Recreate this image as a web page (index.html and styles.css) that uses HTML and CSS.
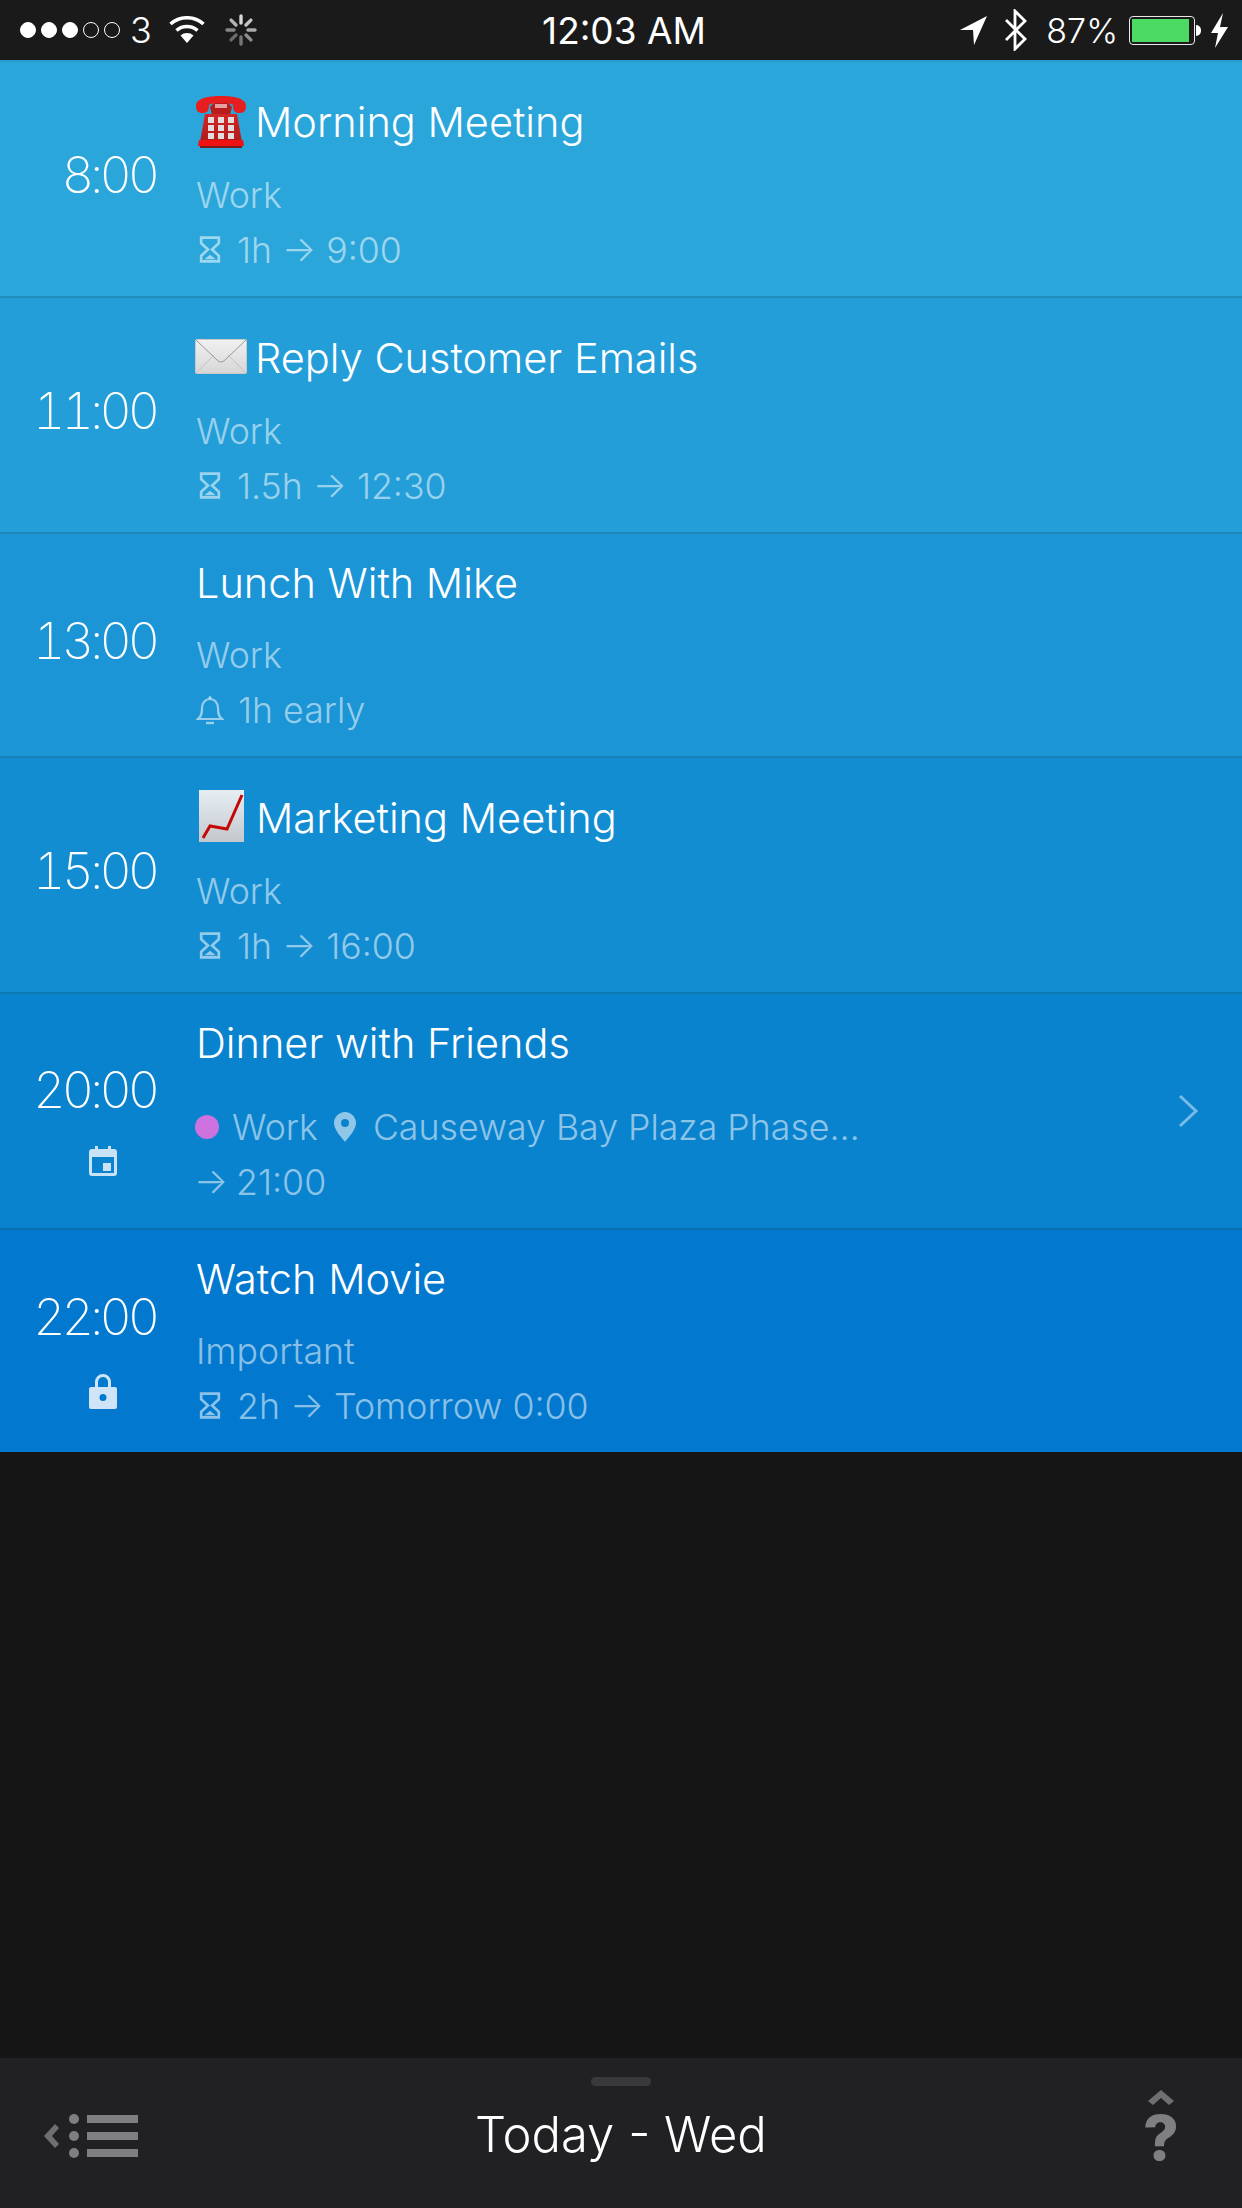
FILE: index.html
```html
<!DOCTYPE html>
<html lang="en">

<head>
	<meta charset="UTF-8" />
	<title>Today</title>
	<link rel="stylesheet" href="styles.css">
</head>

<body>
	<div class="app">
		<!-- status bar -->
		<div class="status">
			<div class="status-left">
				<span class="sig on"></span><span class="sig on"></span><span class="sig on"></span><span class="sig"></span><span class="sig"></span>
				<span class="carrier">3</span>
				<svg class="wifi" width="38" height="28" viewBox="0 0 38 28">
					<path d="M19 27 L12.5 19.5 A10 10 0 0 1 25.5 19.5 Z" fill="#fff" />
					<path d="M8.5 14.5 A16 16 0 0 1 29.5 14.5" fill="none" stroke="#fff" stroke-width="3.6" />
					<path d="M2.5 8 A25 25 0 0 1 35.5 8" fill="none" stroke="#fff" stroke-width="3.6" />
				</svg>
				<svg class="spinner" width="32" height="32" viewBox="0 0 32 32" stroke-width="3.4" stroke-linecap="round">
					<path d="M16 2V9" stroke="#d8d8d8" />
					<path d="M25.9 6.1L21 11" stroke="#c4c4c4" />
					<path d="M30 16H23" stroke="#aaa" />
					<path d="M25.9 25.9L21 21" stroke="#8e8e8e" />
					<path d="M16 30V23" stroke="#777" />
					<path d="M6.1 25.9L11 21" stroke="#6c6c6c" />
					<path d="M2 16H9" stroke="#888" />
					<path d="M6.1 6.1L11 11" stroke="#b4b4b4" />
				</svg>
			</div>
			<div class="clock">12:03 AM</div>
			<div class="status-right">
				<svg class="loc" width="27" height="30" viewBox="0 0 27 30">
					<path d="M0 15 L27 1 L14 30 L13 15 Z" fill="#fff" />
				</svg>
				<svg class="bt" width="24" height="42" viewBox="0 0 24 42">
					<path d="M2 11 L21 30 L11 40 V2 L21 12 L2 31" fill="none" stroke="#fff" stroke-width="2.8" />
				</svg>
				<span class="pct">87%</span>
				<div class="battery">
					<div class="battery-fill"></div>
				</div>
				<div class="battery-nub"></div>
				<svg class="bolt" width="17" height="35" viewBox="0 0 17 35">
					<path d="M12 0 L0 20 H7 L4 35 L17 14 H9 Z" fill="#fff" />
				</svg>
			</div>
		</div>

		<!-- events -->
		<div class="list">
			<div class="row tone1 first tall">
				<div class="when"><div class="time">8:00</div></div>
				<div class="info">
					<div class="title">
						<svg class="emoji phone" width="52" height="54" viewBox="0 0 52 54">
							<defs>
								<linearGradient id="red" x1="0" y1="0" x2="0" y2="1">
									<stop offset="0" stop-color="#d42626" />
									<stop offset="1" stop-color="#b01a1a" />
								</linearGradient>
							</defs>
							<path d="M15 12 L17 20 H35 L37 12 L32 7 H20 Z" fill="#b81c1c" />
							<rect x="20" y="9" width="12" height="4" fill="#e8a0a0" />
							<path d="M10 19 H42 L47 47 H5 Z" fill="url(#red)" />
							<path d="M1 11 C1 3 14 1 26 1 C38 1 51 3 51 11 C51 17 48 18 44 18 C39 18 38 15 38 10 C34 7 18 7 14 10 C14 15 13 18 8 18 C4 18 1 17 1 11 Z" fill="#e61e1e" />
							<path d="M4 45 H48 L49 51 H3 Z" fill="#ee1212" />
							<rect x="5" y="51" width="42" height="2" fill="#7a1c1c" />
							<g fill="#e2dede">
								<rect x="13" y="22" width="6" height="6" /><rect x="23" y="22" width="6" height="6" /><rect x="33" y="22" width="6" height="6" />
								<rect x="13" y="30" width="6" height="6" /><rect x="23" y="30" width="6" height="6" /><rect x="33" y="30" width="6" height="6" />
								<rect x="13" y="38" width="6" height="6" /><rect x="23" y="38" width="6" height="6" /><rect x="33" y="38" width="6" height="6" />
							</g>
						</svg>
						<span>Morning Meeting</span>
					</div>
					<div class="meta">Work</div>
					<div class="meta">
						<svg class="ico" width="22" height="27" viewBox="0 0 21 26" fill="none" stroke="currentColor" stroke-width="2.6">
							<path d="M2 1.5H19V7L12.5 13L19 19V24.5H2V19L8.500 13L2 7Z" />
							<path d="M5 22.500L10.500 18L16 22.500Z" fill="currentColor" stroke="none" />
						</svg>
						<span>1h → 9:00</span>
					</div>
				</div>
			</div>

			<div class="row tone2 tall">
				<div class="when"><div class="time">11:00</div></div>
				<div class="info">
					<div class="title">
						<svg class="emoji mail" width="52" height="35" viewBox="0 0 52 35">
							<defs>
								<linearGradient id="paper" x1="0" y1="0" x2="0" y2="1">
									<stop offset="0" stop-color="#f1f1f1" />
									<stop offset="1" stop-color="#d6d6d6" />
								</linearGradient>
							</defs>
							<rect x="0.500" y="0.500" width="51" height="34" rx="1" fill="url(#paper)" stroke="#c8c8c8" />
							<path d="M1 1 L22 21 Q26 25 30 21 L51 1" fill="none" stroke="#999" stroke-width="1" />
							<path d="M1 34 L19 16 M51 34 L33 16" fill="none" stroke="#c2c2c2" stroke-width="1" />
						</svg>
						<span>Reply Customer Emails</span>
					</div>
					<div class="meta">Work</div>
					<div class="meta">
						<svg class="ico" width="22" height="27" viewBox="0 0 21 26" fill="none" stroke="currentColor" stroke-width="2.6">
							<path d="M2 1.5H19V7L12.5 13L19 19V24.5H2V19L8.500 13L2 7Z" />
							<path d="M5 22.500L10.500 18L16 22.500Z" fill="currentColor" stroke="none" />
						</svg>
						<span>1.5h → 12:30</span>
					</div>
				</div>
			</div>

			<div class="row tone3">
				<div class="when"><div class="time">13:00</div></div>
				<div class="info">
					<div class="title"><span>Lunch With Mike</span></div>
					<div class="meta">Work</div>
					<div class="meta">
						<svg class="ico bell" width="28" height="30" viewBox="0 0 28 30" fill="none" stroke="currentColor" stroke-width="2.2">
							<path d="M2 24 C6 21 6 17 6 13 C6 7.500 9.500 4 14 4 C18.500 4 22 7.500 22 13 C22 17 22 21 26 24 Z" />
							<circle cx="14" cy="2.500" r="1.500" fill="currentColor" stroke="none" />
							<path d="M10 28 H18" stroke-width="2.400" />
						</svg>
						<span>1h early</span>
					</div>
				</div>
			</div>

			<div class="row tone4 tall">
				<div class="when"><div class="time">15:00</div></div>
				<div class="info">
					<div class="title">
						<svg class="emoji chart" width="46" height="52" viewBox="0 0 46 52">
							<defs>
								<linearGradient id="sheet" x1="0" y1="0" x2="0" y2="1">
									<stop offset="0" stop-color="#e6eef4" />
									<stop offset="1" stop-color="#c4c8cc" />
								</linearGradient>
							</defs>
							<rect width="45" height="52" fill="url(#sheet)" />
							<path d="M4 48 L11 36 L28 39 L43 5" fill="none" stroke="#c40808" stroke-width="3" />
						</svg>
						<span>Marketing Meeting</span>
					</div>
					<div class="meta">Work</div>
					<div class="meta">
						<svg class="ico" width="22" height="27" viewBox="0 0 21 26" fill="none" stroke="currentColor" stroke-width="2.6">
							<path d="M2 1.5H19V7L12.5 13L19 19V24.5H2V19L8.500 13L2 7Z" />
							<path d="M5 22.500L10.500 18L16 22.500Z" fill="currentColor" stroke="none" />
						</svg>
						<span>1h → 16:00</span>
					</div>
				</div>
			</div>

			<div class="row tone5 gapped">
				<div class="when has-ico">
					<div class="time">20:00</div>
					<svg class="when-ico" width="28" height="30" viewBox="0 0 28 30">
						<path fill-rule="evenodd" d="M3 3H6V0H9V3H19V0H22V3H25Q28 3 28 6V27Q28 30 25 30H3Q0 30 0 27V6Q0 3 3 3ZM3 11V27H25V11ZM14 17H22V25H14Z" fill="#c9e2f5" />
					</svg>
				</div>
				<div class="info">
					<div class="title"><span>Dinner with Friends</span></div>
					<div class="meta">
						<span class="cal-dot"></span>
						<span>Work</span>
						<svg class="ico pin" width="22" height="30" viewBox="0 0 22 30">
							<path fill-rule="evenodd" d="M11 0C17 0 22 5 22 11C22 18 14 26 11 30C8 26 0 18 0 11C0 5 5 0 11 0ZM11 7A4 4 0 1 0 11 15A4 4 0 1 0 11 7Z" fill="currentColor" />
						</svg>
						<span>Causeway Bay Plaza Phase…</span>
					</div>
					<div class="meta">
						<span class="arrow-only">→ 21:00</span>
					</div>
				</div>
				<svg class="chev" width="22" height="34" viewBox="0 0 22 34">
					<path d="M3 2 L19 17 L3 32" fill="none" stroke="#fff" stroke-opacity=".45" stroke-width="3" />
				</svg>
			</div>

			<div class="row tone6 last">
				<div class="when has-ico">
					<div class="time">22:00</div>
					<svg class="when-ico" width="28" height="36" viewBox="0 0 28 36">
						<path fill-rule="evenodd" d="M6 14V9A8 8 0 0 1 22 9V14H26Q28 14 28 16V34Q28 36 26 36H2Q0 36 0 34V16Q0 14 2 14ZM9 14H19V9A5 5 0 0 0 9 9ZM14 21A3.500 3.500 0 1 0 14 28A3.500 3.500 0 1 0 14 21Z" fill="#cfe4f6" />
					</svg>
				</div>
				<div class="info">
					<div class="title"><span>Watch Movie</span></div>
					<div class="meta">Important</div>
					<div class="meta">
						<svg class="ico" width="22" height="27" viewBox="0 0 21 26" fill="none" stroke="currentColor" stroke-width="2.6">
							<path d="M2 1.5H19V7L12.5 13L19 19V24.5H2V19L8.500 13L2 7Z" />
							<path d="M5 22.500L10.500 18L16 22.500Z" fill="currentColor" stroke="none" />
						</svg>
						<span>2h → Tomorrow 0:00</span>
					</div>
				</div>
			</div>
		</div>

		<!-- bottom bar -->
		<div class="bar">
			<div class="handle"></div>
			<svg class="menu" width="96" height="46" viewBox="0 0 96 46" fill="#7f7f81">
				<path d="M0 23 L11 11 L15 15 L8 23 L15 31 L11 35 Z" fill="#6f6f71" />
				<circle cx="30" cy="6" r="5" /><circle cx="30" cy="23" r="5" /><circle cx="30" cy="40" r="5" />
				<rect x="43" y="2" width="51" height="8" /><rect x="43" y="19" width="51" height="8" /><rect x="43" y="36" width="51" height="8" />
			</svg>
			<div class="bar-title">Today - Wed</div>
			<div class="help">
				<svg class="help-caret" width="26" height="16" viewBox="0 0 26 16">
					<path d="M0 11 L13 0 L26 11 L21 15 L13 8 L5 15 Z" fill="#6f6f71" />
				</svg>
				<span class="help-mark">?</span>
			</div>
		</div>
	</div>
</body>

</html>
```

FILE: styles.css
```css
* {
	box-sizing: border-box;
}

html,
body {
	margin: 0;
	padding: 0;
}

body {
	font-family: Inter, "Noto Sans", sans-serif;
	background-color: #151515;
}

.app {
	width: 1242px;
	height: 2208px;
	display: flex;
	flex-direction: column;
	overflow: hidden;
}

/* status bar */
.status {
	height: 60px;
	flex: none;
	display: grid;
	grid-template-columns: 1fr auto 1fr;
	align-items: center;
	padding: 0 14px 0 20px;
	background-color: #1a1a1a;
	color: white;
}

.status-left,
.status-right {
	display: flex;
	align-items: center;
}

.status-right {
	justify-content: flex-end;
}

.sig {
	width: 16px;
	height: 16px;
	margin-right: 5px;
	border-radius: 50%;
	border: 1px solid white;
}

.sig.on {
	background-color: white;
}

.carrier {
	margin-left: 5px;
	font-size: 36px;
	font-weight: 300;
}

.wifi {
	margin-left: 16px;
}

.spinner {
	margin-left: 19px;
}

.clock {
	font-size: 37px;
	font-weight: 400;
}

.bt {
	margin-left: 17px;
}

.pct {
	margin-left: 18px;
	font-size: 34px;
	font-weight: 300;
}

.battery {
	width: 66px;
	height: 29px;
	margin-left: 11px;
	padding: 2px;
	border: 1px solid #e8e8e8;
	border-radius: 4px;
}

.battery-fill {
	width: 57px;
	height: 100%;
	background-color: #4cd964;
}

.battery-nub {
	width: 5px;
	height: 11px;
	margin-left: 1px;
	background-color: white;
	border-radius: 0 5px 5px 0;
}

.bolt {
	margin-left: 10px;
}

/* events */
.row {
	display: flex;
	position: relative;
	border-bottom: 2px solid rgba(0, 0, 0, .14);
	color: white;
}

.row.first {
	border-top: 2px solid rgba(0, 0, 0, .06);
}

.row.last {
	border-bottom: none;
}

.tone1 {
	background-color: #2ba6db;
}

.tone2 {
	background-color: #239ed8;
}

.tone3 {
	background-color: #1b95d5;
}

.tone4 {
	background-color: #138dd2;
}

.tone5 {
	background-color: #0a83cf;
}

.tone6 {
	background-color: #0279ce;
}

.when {
	width: 158px;
	flex: none;
	display: flex;
	flex-direction: column;
	justify-content: center;
	align-items: flex-end;
	padding-bottom: 8px;
}

.when.has-ico {
	padding: 15px 0 0;
}

.time {
	margin-right: 2px;
	font-size: 50px;
	font-weight: 200;
	line-height: 56px;
	letter-spacing: -4px;
	font-feature-settings: "tnum";
}

.when-ico {
	margin: 28px 41px 0 0;
}

.info {
	margin-left: 38px;
	padding: 25px 0 19px;
}

.title {
	height: 48px;
	margin-bottom: 20px;
	display: flex;
	align-items: flex-end;
	font-size: 41.5px;
	line-height: 48px;
	font-weight: 350;
}

.tall .title {
	height: 59px;
	margin-bottom: 21px;
}

.emoji {
	flex: none;
	margin: 0 8px 8px -1px;
}

.phone {
	margin-bottom: -3px;
}

.chart {
	margin: 0 11px 0 3px;
}

.gapped .title {
	margin-bottom: 32px;
}

.meta {
	height: 55px;
	display: flex;
	align-items: center;
	font-size: 35.7px;
	font-weight: 300;
	color: rgba(255, 255, 255, .55);
}

.ico {
	flex: none;
	margin: 0 16px 0 3px;
}

.bell {
	margin: 0 14px 0 0;
}

.pin {
	margin: 0 17px 0 16px;
}

.cal-dot {
	width: 24px;
	height: 24px;
	margin: 0 13px 0 -1px;
	border-radius: 50%;
	background-color: #cd72de;
}

.arrow-only {
	margin-left: -2px;
	word-spacing: -2px;
}

.chev {
	position: absolute;
	top: 100px;
	right: 43px;
}

/* bottom bar */
.bar {
	margin-top: auto;
	height: 150px;
	flex: none;
	position: relative;
	display: flex;
	align-items: center;
	justify-content: space-between;
	padding: 0 63px 0 44px;
	background-color: #212123;
}

.handle {
	position: absolute;
	top: 19px;
	left: 591px;
	width: 60px;
	height: 9px;
	border-radius: 5px;
	background-color: #39393b;
}

.menu {
	margin-top: 6px;
}

.bar-title {
	position: absolute;
	left: 0;
	right: 0;
	top: 47px;
	text-align: center;
	color: white;
	font-size: 49px;
	line-height: 60px;
	font-weight: 350;
}

.help {
	display: flex;
	flex-direction: column;
	align-items: center;
	margin-top: -9px;
	color: #7f7f81;
}

.help-caret {
	display: block;
	margin-bottom: 3px;
}

.help-mark {
	font-size: 62px;
	line-height: 58px;
	font-weight: 800;
}
```
